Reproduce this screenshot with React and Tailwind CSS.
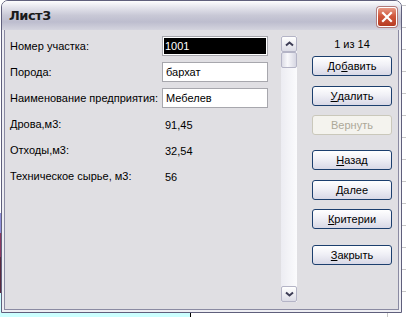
function ScrollButton({ down }) {
  return (
    <div className="w-[16px] h-[16px] rounded-[2px] border border-[#b4b4c6] bg-[linear-gradient(to_bottom,#ffffff,#dcdce6)] flex items-center justify-center">
      <svg width="9" height="6" viewBox="0 0 9 6">
        <path
          d={down ? "M1 1.5 L4.5 4.5 L8 1.5" : "M1 4.5 L4.5 1.5 L8 4.5"}
          fill="none"
          stroke="#3d3d55"
          strokeWidth="2"
        />
      </svg>
    </div>
  );
}

function Btn({ children, className = "" }) {
  return (
    <div
      className={
        "w-[80px] h-[20px] rounded-[3px] border border-[#1c3f6e] bg-[linear-gradient(to_bottom,#ffffff_0%,#f0f0f6_45%,#d8d8e6_100%)] flex items-center justify-center text-[11px] text-black " +
        className
      }
    >
      {children}
    </div>
  );
}

function Row({ label, children }) {
  return (
    <div className="h-[26px] flex items-center">
      <div className="w-[152px] text-[11px] text-black whitespace-nowrap">{label}</div>
      <div className="w-[106px]">{children}</div>
    </div>
  );
}

function Field({ value, selected }) {
  return (
    <div className="h-[20px] w-[106px] border border-[#a7a7ad] bg-white p-[1px] flex items-center">
      {selected ? (
        <div className="h-full w-full bg-black text-white text-[11px] pl-[1px] leading-[16px]">{value}</div>
      ) : (
        <div className="text-[11px] pl-[2px] text-black">{value}</div>
      )}
    </div>
  );
}

export default function App() {
  return (
    <div className="w-[406px] h-[317px] overflow-hidden flex flex-col bg-white font-['Liberation_Sans',Arial,sans-serif]">
      <div className="flex h-[313px]">
        <div className="w-[1px] flex flex-col">
          <div className="h-[213px] bg-white" />
          <div className="h-[20px] bg-[#8f8fd8]" />
          <div className="h-[24px] bg-[#8b3a62]" />
          <div className="h-[36px] bg-[#5a2a3e]" />
          <div className="flex-1 bg-[#ccffff]" />
        </div>

        <div className="w-[401px] flex flex-col border border-[#5f5f7c] rounded-t-[7px] overflow-hidden">
          <div className="h-[29px] flex items-center justify-between pl-[7px] pr-[4px] bg-[linear-gradient(to_bottom,#fdfdfe_0%,#e6e6ee_20%,#c8c8d6_50%,#bdbdce_72%,#d4d4de_100%)]">
            <span className="text-[13px] font-bold text-[#1a1a1a] font-['DejaVu_Sans',sans-serif] tracking-[-0.5px]">Лист3</span>
            <div className="mt-[3px] w-[20px] h-[20px] rounded-[3px] border border-white bg-[linear-gradient(to_bottom,#e79a86,#d0573c_45%,#b63b22)] flex items-center justify-center shadow-[0_0_0_1px_#b07a7a]">
              <svg width="12" height="12" viewBox="0 0 12 12">
                <path d="M2 2 L10 10 M10 2 L2 10" stroke="#fff" strokeWidth="2.2" strokeLinecap="square" />
              </svg>
            </div>
          </div>

          <div className="flex-1 flex flex-col border-x-2 border-b-2 border-[#eeeef3]">
            <div className="flex-1 flex border-x border-b border-[#8a8aa2] bg-[#e0dfe3]">
              <div className="pl-[5px] pt-[3px] flex flex-col">
                <Row label="Номер участка:">
                  <Field value="1001" selected />
                </Row>
                <Row label="Порода:">
                  <Field value="бархат" />
                </Row>
                <Row label="Наименование предприятия:">
                  <Field value="Мебелев" />
                </Row>
                <Row label="Дрова,м3:">
                  <span className="text-[11px] pl-[3px]">91,45</span>
                </Row>
                <Row label="Отходы,м3:">
                  <span className="text-[11px] pl-[3px]">32,54</span>
                </Row>
                <Row label="Техническое сырье, м3:">
                  <span className="text-[11px] pl-[3px]">56</span>
                </Row>
              </div>

              <div className="ml-[13px] mt-[6px] w-[16px] h-[266px] flex flex-col bg-[linear-gradient(to_right,#ececf2,#fbfbfd)]">
                <ScrollButton />
                <div className="h-[16px] rounded-[2px] border border-[#b4b4c6] bg-[linear-gradient(to_right,#dcdce6,#f8f8fb_40%,#d6d6e2)]" />
                <div className="flex-1" />
                <ScrollButton down />
              </div>

              <div className="ml-[15px] mt-[6px] flex flex-col">
                <div className="h-[16px] leading-[16px] text-[11px] text-center w-[80px]">1 из 14</div>
                <Btn className="mt-[4px]">До<u>б</u>авить</Btn>
                <Btn className="mt-[10px]"><u>У</u>далить</Btn>
                <div className="mt-[9px] w-[80px] h-[20px] rounded-[3px] border border-[#cac8bb] bg-[#f4f3ee] flex items-center justify-center text-[11px] text-[#aca899]">
                  Вернуть
                </div>
                <Btn className="mt-[15px]"><u>Н</u>азад</Btn>
                <Btn className="mt-[10px]"><u>Д</u>алее</Btn>
                <Btn className="mt-[9px]"><u>К</u>ритерии</Btn>
                <Btn className="mt-[16px]"><u>З</u>акрыть</Btn>
              </div>
            </div>
          </div>
        </div>

        <div className="w-[4px] bg-[repeating-linear-gradient(to_bottom,#fff_0px,#fff_5px,#c8c8c8_5px,#c8c8c8_6px,#fff_6px,#fff_22px)]" />
      </div>

      <div className="h-[4px] flex">
        <div className="w-[190px] bg-[#ccffff]" />
        <div className="w-[1px] bg-black" />
        <div className="w-[196px] bg-white" />
        <div className="w-[1px] bg-[#c8c8c8]" />
        <div className="flex-1 bg-white" />
      </div>
    </div>
  );
}
